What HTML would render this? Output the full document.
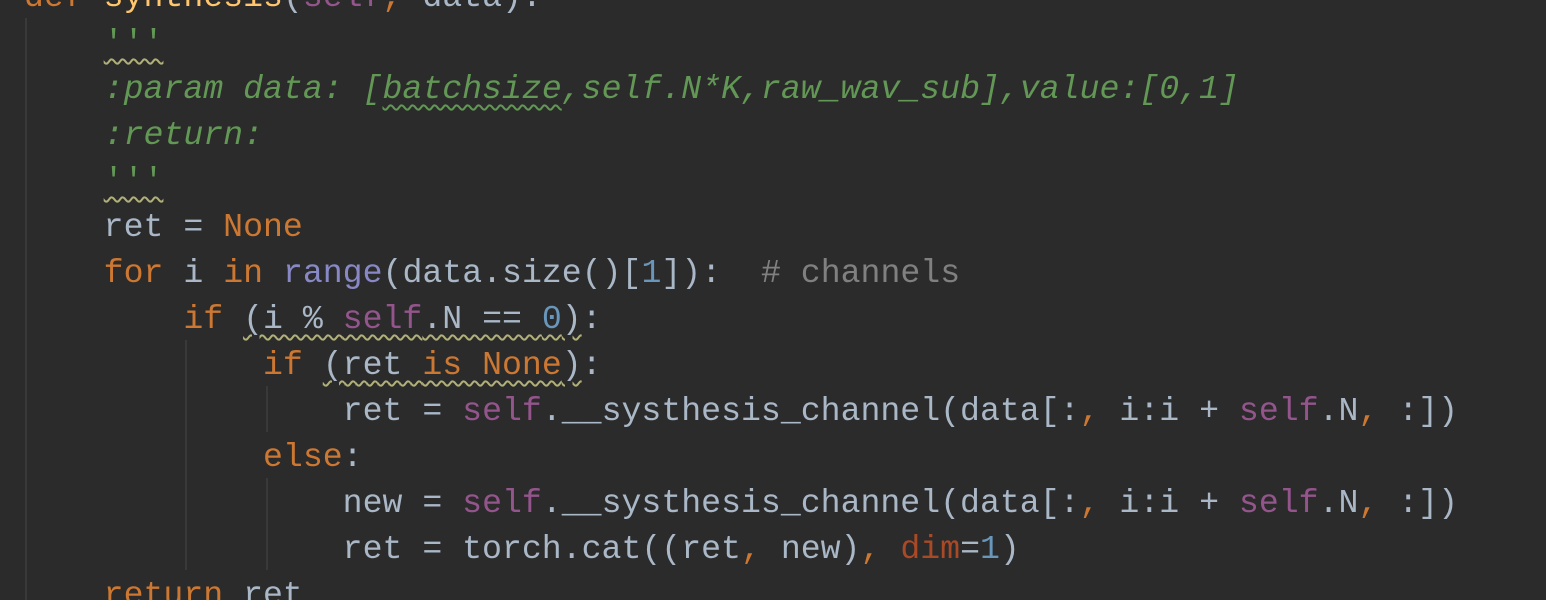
<!DOCTYPE html>
<html><head><style>
html,body{margin:0;padding:0;background:#2b2b2b;width:1546px;height:600px;overflow:hidden;position:relative}
.l{position:absolute;left:24px;height:46px;line-height:46px;font-family:"Liberation Mono",monospace;font-size:33.2px;color:#a9b7c6;white-space:pre}
.k{color:#cc7832}.s{color:#94558d}.n{color:#6897bb}.d{color:#629755;font-style:italic}.c{color:#808080}.f{color:#ffc66d}.b{color:#8888c6}.a{color:#aa4926}
.w{text-decoration:underline wavy #b1b07a;text-decoration-thickness:2px;text-underline-offset:6px}
.wg{text-decoration:underline wavy #629755;text-decoration-thickness:2px;text-underline-offset:6px}
.g{position:absolute;width:2px;background:#393939}
</style></head><body>
<div class="g" style="left:25px;top:18px;height:582px"></div>
<div class="g" style="left:185px;top:340px;height:230px"></div>
<div class="g" style="left:266px;top:386px;height:46px"></div>
<div class="g" style="left:266px;top:478px;height:92px"></div>
<div class="l" style="top:-26px"><span class="k">def </span><span class="f">synthesis</span>(<span class="s">self</span><span class="k">, </span>data):</div>
<div class="l" style="top:20px">    <span class="wg" style="color:#629755;text-decoration-color:#b1b07a">'''</span></div>
<div class="l" style="top:66px">    <span class="d">:param data: [<span class="wg">batchsize</span>,self.N*K,raw_wav_sub],value:[0,1]</span></div>
<div class="l" style="top:112px">    <span class="d">:return:</span></div>
<div class="l" style="top:158px">    <span class="wg" style="color:#629755;text-decoration-color:#b1b07a">'''</span></div>
<div class="l" style="top:204px">    ret = <span class="k">None</span></div>
<div class="l" style="top:250px">    <span class="k">for </span>i <span class="k">in </span><span class="b">range</span>(data.size()[<span class="n">1</span>]):  <span class="c"># channels</span></div>
<div class="l" style="top:296px">        <span class="k">if </span><span class="w">(i % <span class="s">self</span>.N == <span class="n">0</span>)</span>:</div>
<div class="l" style="top:342px">            <span class="k">if </span><span class="w">(ret <span class="k">is None</span>)</span>:</div>
<div class="l" style="top:388px">                ret = <span class="s">self</span>.__systhesis_channel(data[:<span class="k">, </span>i:i + <span class="s">self</span>.N<span class="k">, </span>:])</div>
<div class="l" style="top:434px">            <span class="k">else</span>:</div>
<div class="l" style="top:480px">                new = <span class="s">self</span>.__systhesis_channel(data[:<span class="k">, </span>i:i + <span class="s">self</span>.N<span class="k">, </span>:])</div>
<div class="l" style="top:526px">                ret = torch.cat((ret<span class="k">, </span>new)<span class="k">, </span><span class="a">dim</span>=<span class="n">1</span>)</div>
<div class="l" style="top:572px">    <span class="k">return </span>ret</div>
</body></html>
